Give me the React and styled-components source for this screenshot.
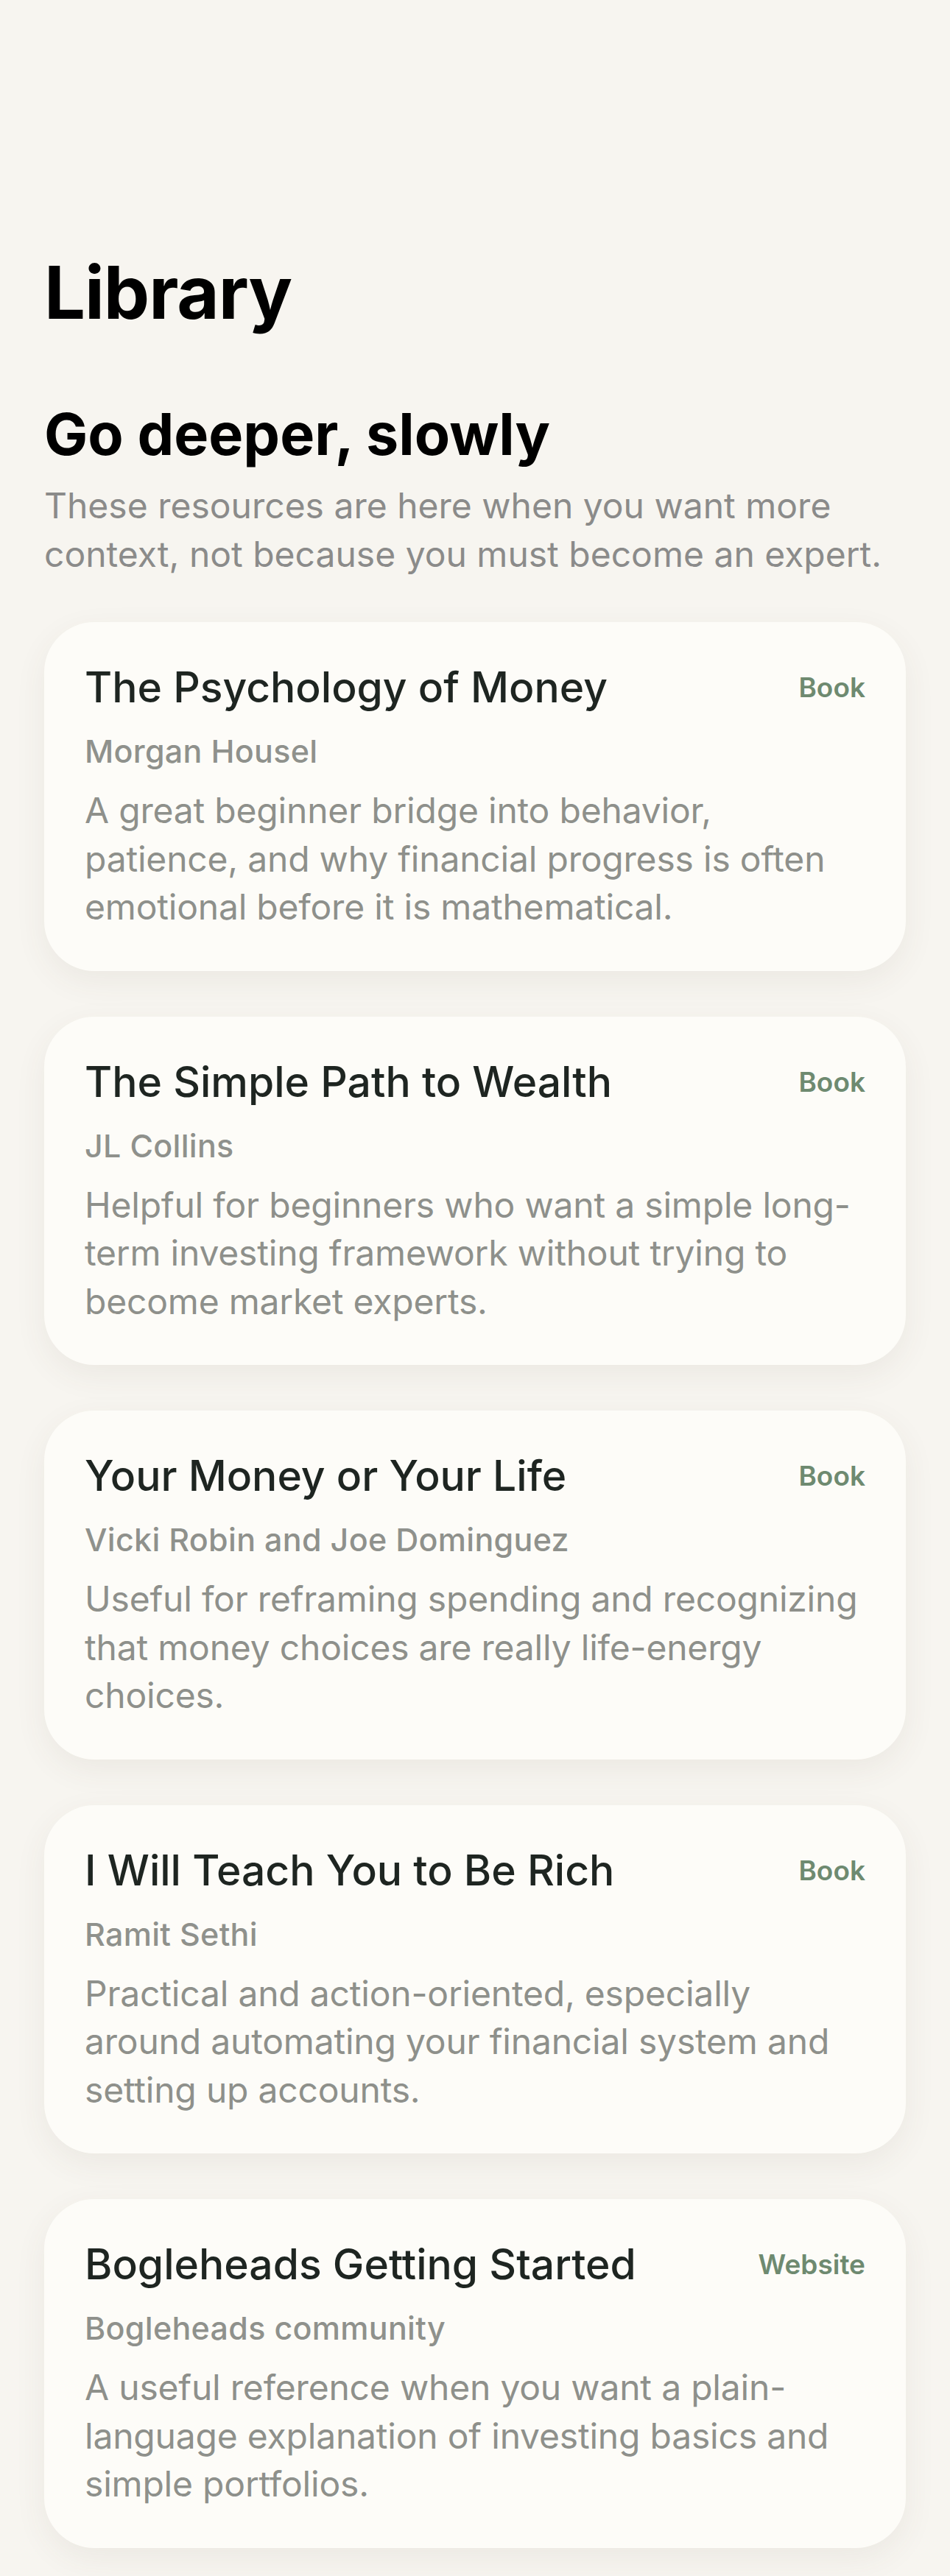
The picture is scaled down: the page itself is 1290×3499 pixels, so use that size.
import React from 'react';
import styled, { createGlobalStyle } from 'styled-components';

const resources = [
  {
    title: 'The Psychology of Money',
    author: 'Morgan Housel',
    kind: 'Book',
    note: 'A great beginner bridge into behavior, patience, and why financial progress is often emotional before it is mathematical.',
  },
  {
    title: 'The Simple Path to Wealth',
    author: 'JL Collins',
    kind: 'Book',
    note: 'Helpful for beginners who want a simple long-term investing framework without trying to become market experts.',
  },
  {
    title: 'Your Money or Your Life',
    author: 'Vicki Robin and Joe Dominguez',
    kind: 'Book',
    note: 'Useful for reframing spending and recognizing that money choices are really life-energy choices.',
  },
  {
    title: 'I Will Teach You to Be Rich',
    author: 'Ramit Sethi',
    kind: 'Book',
    note: 'Practical and action-oriented, especially around automating your financial system and setting up accounts.',
  },
  {
    title: 'Bogleheads Getting Started',
    author: 'Bogleheads community',
    kind: 'Website',
    note: 'A useful reference when you want a plain-language explanation of investing basics and simple portfolios.',
  },
];

const GlobalStyle = createGlobalStyle`
  html, body {
    margin: 0;
    padding: 0;
    background: #f7f5f0;
  }
  body {
    font-family: Inter, "Noto Sans", "Liberation Sans", sans-serif;
    -webkit-font-smoothing: antialiased;
  }
`;

const Page = styled.main`
  min-height: 3499px;
  box-sizing: border-box;
  padding: 337px 60px 40px;
  background: #f7f5f0;
`;

const LargeTitle = styled.h1`
  margin: 0;
  font-size: 99px;
  line-height: 120px;
  font-weight: 700;
  letter-spacing: -1px;
  color: #000;
`;

const SectionTitle = styled.h2`
  margin: 85px 0 0;
  font-size: 79px;
  line-height: 94px;
  font-weight: 700;
  letter-spacing: 0;
  color: #000;
`;

const Intro = styled.p`
  margin: 18px 0 0;
  font-size: 48px;
  line-height: 66px;
  font-weight: 400;
  color: #8b8b8a;
`;

const List = styled.section`
  display: flex;
  flex-direction: column;
  gap: 62px;
  margin-top: 59px;
`;

const Card = styled.article`
  box-sizing: border-box;
  padding: 54px 55px 54px;
  border-radius: 68px;
  background: #fdfcf8;
  box-shadow: 0 14px 44px rgba(90, 75, 50, 0.07);
`;

const CardHead = styled.div`
  display: flex;
  align-items: center;
  justify-content: space-between;
  gap: 30px;
`;

const CardTitle = styled.h3`
  margin: 0;
  font-size: 57px;
  line-height: 70px;
  font-weight: 500;
  color: #1e2521;
`;

const Kind = styled.span`
  flex-shrink: 0;
  font-size: 37px;
  line-height: 44px;
  font-weight: 600;
  color: #6e8a70;
`;

const Author = styled.div`
  margin-top: 25px;
  font-size: 43px;
  line-height: 52px;
  font-weight: 500;
  letter-spacing: 0.3px;
  color: #8f918c;
`;

const Note = styled.p`
  margin: 22px 0 0;
  font-size: 48px;
  line-height: 65.5px;
  font-weight: 400;
  letter-spacing: -0.2px;
  color: #8e908b;
`;

const ResourceCard = ({ item }) => (
  <Card>
    <CardHead>
      <CardTitle>{item.title}</CardTitle>
      <Kind>{item.kind}</Kind>
    </CardHead>
    <Author>{item.author}</Author>
    <Note>{item.note}</Note>
  </Card>
);

const App = () => (
  <>
    <GlobalStyle />
    <Page>
      <LargeTitle>Library</LargeTitle>
      <SectionTitle>Go deeper, slowly</SectionTitle>
      <Intro>
        These resources are here when you want more context, not because you must become an expert.
      </Intro>
      <List>
        {resources.map((item) => (
          <ResourceCard key={item.title} item={item} />
        ))}
      </List>
    </Page>
  </>
);

export default App;
